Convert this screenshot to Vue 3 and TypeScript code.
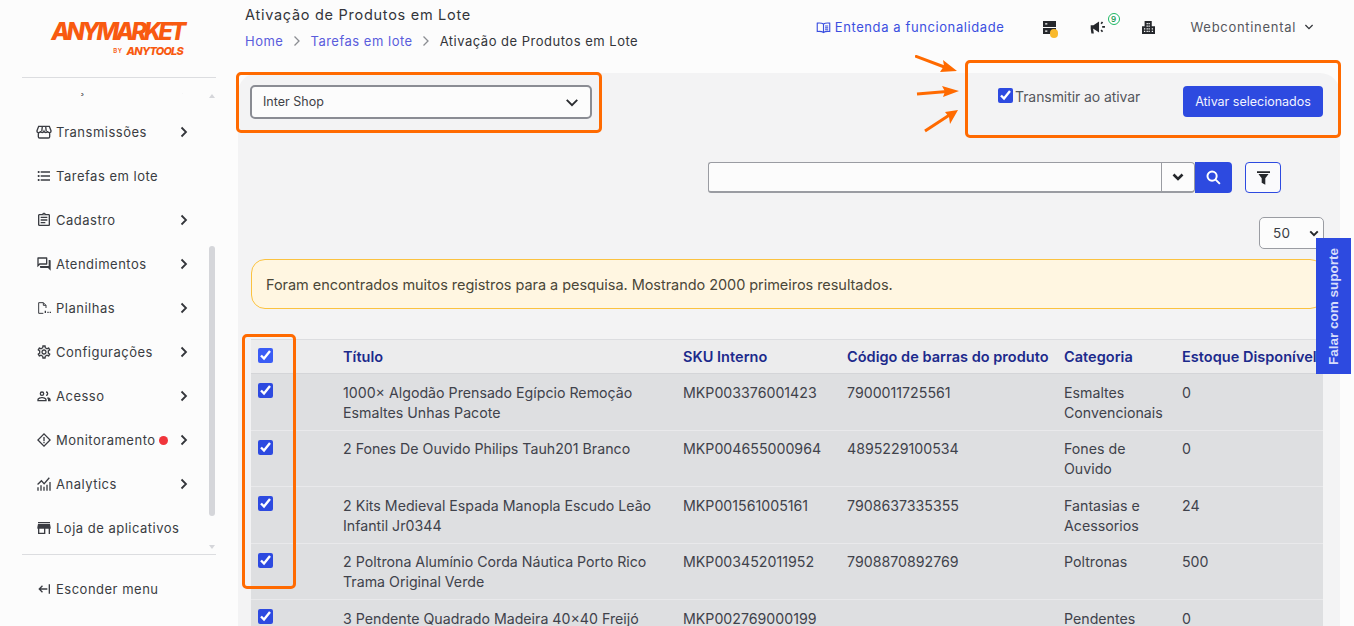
<script setup lang="ts">
interface NavItem { label: string; icon: string; chevron: boolean; dot?: boolean }
interface Row { title: string[]; sku: string; code: string; cat: string[]; stock: string }

const icons: Record<string, string> = {
  list: 'M4 10.5c-.83 0-1.5.67-1.5 1.5s.67 1.5 1.5 1.5 1.5-.67 1.5-1.5-.67-1.5-1.5-1.5zm0-6c-.83 0-1.5.67-1.5 1.5S3.17 7.5 4 7.5 5.5 6.83 5.5 6 4.83 4.5 4 4.5zm0 12c-.83 0-1.5.68-1.5 1.5s.68 1.5 1.5 1.5 1.5-.68 1.5-1.5-.67-1.5-1.5-1.5zM7 19h14v-2H7v2zm0-6h14v-2H7v2zm0-8v2h14V5H7z',
  clip: 'M7 15h7v2H7zm0-4h10v2H7zm0-4h10v2H7zm12-4h-4.18C14.4 1.84 13.3 1 12 1c-1.3 0-2.4.84-2.82 2H5c-.14 0-.27.01-.4.04-.39.08-.74.28-1.01.55-.18.18-.33.4-.43.64-.1.23-.16.49-.16.77v14c0 .27.06.54.16.78s.25.45.43.64c.27.27.62.47 1.01.55.13.02.26.03.4.03h14c1.1 0 2-.9 2-2V5c0-1.1-.9-2-2-2zm-7-.25c.41 0 .75.34.75.75s-.34.75-.75.75-.75-.34-.75-.75.34-.75.75-.75zM19 19H5V5h14v14z',
  chat: 'M15 4v7H5.17L4 12.17V4h11m1-2H3c-.55 0-1 .45-1 1v14l4-4h10c.55 0 1-.45 1-1V3c0-.55-.45-1-1-1zm5 4h-2v9H6v2c0 .55.45 1 1 1h11l4 4V7c0-.55-.45-1-1-1z',
  gear: 'M19.43 12.98c.04-.32.07-.64.07-.98 0-.34-.03-.66-.07-.98l2.11-1.65c.19-.15.24-.42.12-.64l-2-3.46c-.09-.16-.26-.25-.44-.25-.06 0-.12.01-.17.03l-2.49 1c-.52-.4-1.08-.73-1.69-.98l-.38-2.65C14.46 2.18 14.25 2 14 2h-4c-.25 0-.46.18-.49.42l-.38 2.65c-.61.25-1.17.59-1.69.98l-2.49-1c-.06-.02-.12-.03-.18-.03-.17 0-.34.09-.43.25l-2 3.46c-.13.22-.07.49.12.64l2.11 1.65c-.04.32-.07.65-.07.98 0 .33.03.66.07.98l-2.11 1.65c-.19.15-.24.42-.12.64l2 3.46c.09.16.26.25.44.25.06 0 .12-.01.17-.03l2.49-1c.52.4 1.08.73 1.69.98l.38 2.65c.03.24.24.42.49.42h4c.25 0 .46-.18.49-.42l.38-2.65c.61-.25 1.17-.59 1.69-.98l2.49 1c.06.02.12.03.18.03.17 0 .34-.09.43-.25l2-3.46c.12-.22.07-.49-.12-.64l-2.11-1.65zm-1.98-1.71c.04.31.05.52.05.73 0 .21-.02.43-.05.73l-.14 1.13.89.7 1.08.84-.7 1.21-1.27-.51-1.04-.42-.9.68c-.43.32-.84.56-1.25.73l-1.06.43-.16 1.13-.2 1.35h-1.4l-.19-1.35-.16-1.13-1.06-.43c-.43-.18-.83-.41-1.23-.71l-.91-.7-1.06.43-1.27.51-.7-1.21 1.08-.84.89-.7-.14-1.13c-.03-.31-.05-.54-.05-.74s.02-.43.05-.73l.14-1.13-.89-.7-1.08-.84.7-1.21 1.27.51 1.04.42.9-.68c.43-.32.84-.56 1.25-.73l1.06-.43.16-1.13.2-1.35h1.39l.19 1.35.16 1.13 1.06.43c.43.18.83.41 1.23.71l.91.7 1.06-.43 1.27-.51.7 1.21-1.07.85-.89.7.14 1.13zM12 8c-2.21 0-4 1.79-4 4s1.79 4 4 4 4-1.79 4-4-1.79-4-4-4zm0 6c-1.1 0-2-.9-2-2s.9-2 2-2 2 .9 2 2-.9 2-2 2z',
  people: 'M9 5a3.5 3.5 0 1 0 0 7 3.5 3.5 0 0 0 0-7zm0 2a1.5 1.5 0 1 1 0 3 1.5 1.5 0 0 1 0-3zM9 13.5c-2.7 0-7 1.3-7 4V20h14v-2.500c0-2.700-4.300-4-7-4zM4 18v-.5c.4-.9 3.200-2 5-2s4.600 1.100 5 2v.5zM15 5v2a1.500 1.500 0 0 1 0 3v2a3.500 3.500 0 0 0 0-7zM17.500 14l-1 1.400c.9.500 1.500 1.200 1.500 2.100V20h4v-2.500c0-1.800-2.200-3-4.500-3.500z',
  warn: 'M12 1.500 1.500 12 12 22.500 22.500 12zM12 4.300 19.700 12 12 19.700 4.300 12zM11 7.500h2v6h-2zM11 14.800h2v2h-2z',
  chart: 'M2 22v-5h2v5zM6.500 22v-8h2v8zM11 22v-6h2v6zM15.500 22v-9h2v9zM20 22V9h2v13zM3 13.500 1.700 12l6.500-6.500 4 4.500 7-8 1.500 1.300-8.500 9.700-4-4.500z',
  shop: 'M21 3H3v2h18zM22 13v-2l-1-5H3l-1 5v2h1v8h11v-8h5v8h2v-8zM12 19H5v-6h7z',
}

const nav: NavItem[] = [
  { label: 'Preços', icon: 'list', chevron: true },
  { label: 'Transmissões', icon: 'store', chevron: true },
  { label: 'Tarefas em lote', icon: 'list', chevron: false },
  { label: 'Cadastro', icon: 'clip', chevron: true },
  { label: 'Atendimentos', icon: 'chat', chevron: true },
  { label: 'Planilhas', icon: 'xls', chevron: true },
  { label: 'Configurações', icon: 'gear', chevron: true },
  { label: 'Acesso', icon: 'people', chevron: true },
  { label: 'Monitoramento', icon: 'warn', chevron: true, dot: true },
  { label: 'Analytics', icon: 'chart', chevron: true },
  { label: 'Loja de aplicativos', icon: 'shop', chevron: false },
]

const rows: Row[] = [
  { title: ['1000× Algodão Prensado Egípcio Remoção', 'Esmaltes Unhas Pacote'], sku: 'MKP003376001423', code: '7900011725561', cat: ['Esmaltes', 'Convencionais'], stock: '0' },
  { title: ['2 Fones De Ouvido Philips Tauh201 Branco'], sku: 'MKP004655000964', code: '4895229100534', cat: ['Fones de', 'Ouvido'], stock: '0' },
  { title: ['2 Kits Medieval Espada Manopla Escudo Leão', 'Infantil Jr0344'], sku: 'MKP001561005161', code: '7908637335355', cat: ['Fantasias e', 'Acessorios'], stock: '24' },
  { title: ['2 Poltrona Alumínio Corda Náutica Porto Rico', 'Trama Original Verde'], sku: 'MKP003452011952', code: '7908870892769', cat: ['Poltronas'], stock: '500' },
  { title: ['3 Pendente Quadrado Madeira 40×40 Freijó'], sku: 'MKP002769000199', code: '', cat: ['Pendentes'], stock: '0' },
]
</script>

<template>
  <div class="page">
    <aside class="side">
      <div class="logo">
        <div class="logo-main">ANYMARKET</div>
        <div class="logo-sub"><span class="by">BY</span><span class="tools">ANYTOOLS</span></div>
      </div>
      <div class="rule"></div>
      <div class="nav-wrap">
        <ul class="nav">
          <li v-for="item in nav" :key="item.label" class="nav-item">
            <svg class="nav-ic" viewBox="0 0 24 24" aria-hidden="true">
              <template v-if="item.icon === 'store'">
                <path class="st" d="M4 3.500h16l2.500 6.500a2.600 2.600 0 0 1-5.200.8 2.800 2.800 0 0 1-5.300 0 2.800 2.800 0 0 1-5.300 0 2.600 2.600 0 0 1-5.200-.8zM3.500 13v6a2 2 0 0 0 2 2h13a2 2 0 0 0 2-2v-6M9.500 3.500l-.8 7M14.500 3.500l.8 7" />
              </template>
              <template v-else-if="item.icon === 'xls'">
                <path class="st thin" d="M4 20V4h7l4 4v4M11 4v4h4M4 20h7" />
                <path d="M13 16h2v3.500h-2zM17 17.500h2v2h-2zM20.500 17.500h2v2h-2z" />
              </template>
              <path v-else :d="icons[item.icon]" />
            </svg>
            <span class="nav-label">{{ item.label }}</span>
            <span v-if="item.dot" class="red-dot"></span>
            <svg v-if="item.chevron" class="nav-chev" viewBox="0 0 10 12" aria-hidden="true"><path d="M2.500 1.500 7 6l-4.500 4.500" /></svg>
          </li>
        </ul>
        <div class="bar">
          <span class="bar-up"></span>
          <span class="bar-thumb"></span>
          <span class="bar-down"></span>
        </div>
      </div>
      <div class="rule"></div>
      <div class="hide-menu">
        <svg class="nav-ic" viewBox="0 0 24 24" aria-hidden="true"><path d="M9 6.500 3.500 12 9 17.500 10.400 16l-3-3H17v-2H7.400l3-3zM19 5h2v14h-2z" /></svg>
        <span>Esconder menu</span>
      </div>
    </aside>

    <main class="main">
      <header class="top">
        <div class="crumbs">
          <div class="page-title">Ativação de Produtos em Lote</div>
          <nav class="path">
            <a>Home</a>
            <svg class="sep" viewBox="0 0 10 12" aria-hidden="true"><path d="M2.500 1.500 7 6l-4.500 4.500" /></svg>
            <a>Tarefas em lote</a>
            <svg class="sep" viewBox="0 0 10 12" aria-hidden="true"><path d="M2.500 1.500 7 6l-4.500 4.500" /></svg>
            <span>Ativação de Produtos em Lote</span>
          </nav>
        </div>
        <div class="tools-top">
          <a class="learn">
            <svg class="book" viewBox="0 0 24 24" aria-hidden="true"><path d="M12 6.500C10 5 6 4.500 2 5v13.500c4-.5 8 0 10 1.500 2-1.500 6-2 10-1.500V5c-4-.5-8 0-10 1.500zM12 6.500V20M14.500 9.500h5M14.500 12.500h5M14.500 15.500h5" /></svg>
            Entenda a funcionalidade
          </a>
          <span class="t-ic t-server">
            <svg viewBox="2 2 18 18" aria-hidden="true"><path d="M2 2h18v8.200H2zM2 11.800h18V20H2z" fill="#26282c" /><path d="M5 5h3v2H5zM5 15h3v2H5z" fill="#fff" /></svg>
            <i class="amber"></i>
          </span>
          <span class="t-ic t-mega">
            <svg viewBox="1 3 23 20" aria-hidden="true"><path d="M2 9h4l8-5.500v16L6 14H5.500l1 7H3l-1-7z" fill="#26282c" /><path d="M17 7l2-2.500M18.500 11.500h4M17 16l2 2.500" stroke="#26282c" stroke-width="2.400" fill="none" /></svg>
            <b class="nine">9</b>
          </span>
          <span class="t-ic t-bld">
            <svg viewBox="2 2 20 20" aria-hidden="true"><path fill-rule="evenodd" d="M6 2h11v8h5v12H2V10h4zM9 5v2h2V5zm3 0v2h2V5zM9 9v2h2V9zm3 0v2h2V9zM9 13v2h2v-2zm3 0v2h2v-2zM5 13v2h2v-2zm12 0v2h2v-2zM5 17v2h2v-2zm4 0v2h2v-2zm3 0v2h2v-2zm5 0v2h2v-2z" fill="#26282c" /></svg>
          </span>
          <span class="account">Webcontinental
            <svg class="acc-chev" viewBox="0 0 12 10" aria-hidden="true"><path d="M1.500 2.500 6 7l4.500-4.500" /></svg>
          </span>
        </div>
      </header>

      <section class="card">
        <div class="row-controls">
          <div class="shop-select">
            <span>Inter Shop</span>
            <svg class="sel-chev" viewBox="0 0 16 10" aria-hidden="true"><path d="M2 2l6 6 6-6" /></svg>
          </div>
          <div class="actions">
            <label class="transmit"><input class="cb" type="checkbox" checked />Transmitir ao ativar</label>
            <button class="primary" type="button">Ativar selecionados</button>
          </div>
        </div>

        <div class="row-search">
          <div class="search">
            <input class="search-input" type="text" />
            <span class="search-drop"><svg viewBox="0 0 12 8" aria-hidden="true"><path d="M1.500 1.500 6 6l4.500-4.500" /></svg></span>
            <button class="search-go" type="button" aria-label="Buscar">
              <svg viewBox="0 0 24 24" aria-hidden="true"><circle cx="10" cy="10" r="6.500" /><path d="M15 15l6 6" /></svg>
            </button>
          </div>
          <button class="filter" type="button" aria-label="Filtro">
            <svg viewBox="3 3 18 19" aria-hidden="true"><path d="M3 3h18v2.500H3zM5 7h14l-4.500 6v9l-5-3v-6z" /></svg>
          </button>
        </div>

        <div class="row-size">
          <div class="size"><span>50</span><svg viewBox="0 0 12 8" aria-hidden="true"><path d="M1.500 1.500 6 6l4.500-4.500" /></svg></div>
        </div>

        <div class="alert">Foram encontrados muitos registros para a pesquisa. Mostrando 2000 primeiros resultados.</div>

        <div class="table">
          <div class="tr th">
            <div class="c-check"><input class="cb cb-head" type="checkbox" checked /></div>
            <div>Título</div>
            <div>SKU Interno</div>
            <div>Código de barras do produto</div>
            <div>Categoria</div>
            <div class="nowrap">Estoque Disponível</div>
          </div>
          <div v-for="r in rows" :key="r.sku" class="tr td">
            <div class="c-check"><input class="cb" type="checkbox" checked /></div>
            <div><div v-for="t in r.title" :key="t">{{ t }}</div></div>
            <div>{{ r.sku }}</div>
            <div>{{ r.code }}</div>
            <div><div v-for="t in r.cat" :key="t">{{ t }}</div></div>
            <div>{{ r.stock }}</div>
          </div>
        </div>
      </section>
    </main>

    <div class="support">Falar com suporte</div>

    <!-- highlight annotations drawn over the screenshot -->
    <div class="mark m-select"></div>
    <div class="mark m-actions"></div>
    <div class="mark m-checks"></div>
    <svg class="arrows" viewBox="0 0 60 80" aria-hidden="true">
      <path d="M0 1 32 13M2 39 32 36.500M10 76 36 59" />
      <path class="head" d="M42 16 25 17 29 11 28 5zM44 36 28 42 30 36.500 27 31zM43 55 35 69 34 62 30 57z" />
    </svg>
  </div>
</template>

<style>
html, body { margin: 0; background: #fcfcfc; }
</style>

<style scoped>
* { box-sizing: border-box; }
.page {
  position: relative;
  display: flex;
  width: 1354px;
  height: 626px;
  overflow: hidden;
  background: #fcfcfc;
  color: #3a3c42;
  font-family: Inter, "Noto Sans", sans-serif;
}

/* sidebar */
.side { width: 238px; flex: none; padding: 0 22px; display: flex; flex-direction: column; }
.logo { height: 77px; padding: 20px 33px 0 0; text-align: right; color: #f85a10; font-style: italic; }
.logo-main { font-size: 24px; line-height: 24px; font-weight: 800; letter-spacing: -3.200px; }
.logo-sub { display: flex; justify-content: flex-end; align-items: center; gap: 4px; margin-top: 1px; line-height: 12px; }
.by { font-size: 6px; font-style: normal; font-weight: 600; letter-spacing: .5px; }
.tools { font-size: 11px; font-weight: 800; letter-spacing: -.8px; }
.rule { height: 1px; background: #dcdde0; flex: none; }
.nav-wrap { position: relative; height: 476px; overflow: hidden; flex: none; }
.nav { list-style: none; margin: -12px 0 0; padding: 0; clip-path: inset(27px 0 0 0); }
.nav-item { height: 44px; display: flex; align-items: center; padding-left: 14px; font-size: 13px; letter-spacing: .5px; position: relative; }
.nav-ic { width: 16px; height: 16px; fill: #3a3c42; flex: none; margin-right: 4px; }
.st { fill: none; stroke: #3a3c42; stroke-width: 2; }
.st.thin { stroke-width: 1.500; }
.nav-label { white-space: nowrap; }
.red-dot { width: 9px; height: 9px; border-radius: 50%; background: #f0353b; margin-left: 3px; }
.nav-chev { position: absolute; left: 157px; top: 16px; width: 10px; height: 12px; fill: none; stroke: #33353a; stroke-width: 1.800; }
.bar { position: absolute; right: 0; top: 0; bottom: 0; width: 8px; display: block; }
.bar-thumb { position: absolute; left: 1px; top: 168px; width: 6px; height: 270px; border-radius: 3px; background: #d5d6da; }
.bar-up, .bar-down { position: absolute; left: 1px; width: 0; height: 0; border: 3px solid transparent; }
.bar-up { top: 13px; border-bottom: 4px solid #d5d6da; }
.bar-down { bottom: 2px; border-top: 4px solid #d5d6da; }
.hide-menu { display: flex; align-items: center; height: 68px; padding-left: 14px; font-size: 13px; letter-spacing: .5px; }

/* main */
.main { width: 1102px; flex: none; display: flex; flex-direction: column; min-height: 0; }
.top { height: 73px; display: flex; justify-content: space-between; padding: 6px 26px 0 7px; }
.page-title { font-size: 14.500px; line-height: 17px; letter-spacing: .72px; color: #33353a; }
.path { display: flex; align-items: center; margin-top: 10px; font-size: 13px; line-height: 16px; letter-spacing: .5px; color: #33353a; }
.path a { color: #5a5ddc; }
.sep { width: 10px; height: 12px; margin: 0 8.500px; fill: none; stroke: #8b8d92; stroke-width: 1.300; }
.tools-top { display: flex; align-items: flex-start; padding-top: 13px; font-size: 13px; letter-spacing: .6px; }
.learn { display: flex; align-items: center; gap: 4px; color: #3b4fe0; line-height: 16px; margin-right: 38px; }
.book { width: 15px; height: 15px; fill: none; stroke: #3b4fe0; stroke-width: 1.800; }
.t-ic { position: relative; display: block; width: 16px; height: 14px; margin-top: 2px; margin-right: 31px; }
.t-ic svg { display: block; width: 16px; height: 14px; }
.t-server svg { width: 13px; height: 13px; }
.t-bld svg { width: 13px; height: 13px; }
.amber { position: absolute; left: 7px; top: 8px; width: 8.500px; height: 8.500px; border-radius: 50%; background: #f9b92c; }
.nine { position: absolute; left: 18px; top: -8px; width: 12px; height: 12px; border: 1px solid #1fb864; border-radius: 50%; background: #fff; color: #1b9c55; font-size: 8px; line-height: 10px; text-align: center; font-weight: 600; letter-spacing: 0; }
.t-mega { margin-right: 36px; }
.t-bld { width: 13px; margin-right: 36px; }
.account { display: flex; align-items: center; color: #55575c; line-height: 16px; letter-spacing: .7px; }
.acc-chev { width: 10px; height: 8px; margin-left: 8px; fill: none; stroke: #33353a; stroke-width: 1.600; }

/* card */
.card {
  flex: 1;
  min-height: 0;
  overflow: hidden;
  background: #f3f3f4;
  border-radius: 20px 20px 0 0;
  padding: 12px 16px 0 13px;
}
.row-controls { display: flex; justify-content: space-between; align-items: flex-start; height: 77px; }
.shop-select { width: 342px; height: 34px; margin-left: -1px; border: 2px solid #8a8c93; border-radius: 5px; background: #fcfcfc; display: flex; align-items: center; justify-content: space-between; padding: 0 11px 2px 11px; font-size: 12.500px; color: #3f4147; }
.sel-chev { width: 14px; height: 9px; fill: none; stroke: #2b2d31; stroke-width: 2.200; margin-top: 2px; }
.actions { display: flex; align-items: flex-start; width: 326px; }
.transmit { display: flex; align-items: center; gap: 2px; width: 185px; height: 22px; font-size: 14px; letter-spacing: -.08px; color: #55575c; }
.cb { width: 15px; height: 15px; margin: 0; accent-color: #2d4ae0; flex: none; }
.transmit .cb { margin-bottom: 1px; }
.primary { width: 140px; height: 31px; margin-top: 1px; border: 0; border-radius: 4px; background: #2d4ae0; color: #f2f3ff; font: 12.500px Inter, "Noto Sans", sans-serif; letter-spacing: 0; }
.row-search { display: flex; justify-content: flex-end; height: 55px; gap: 13px; padding-right: 43px; }
.search { display: flex; height: 31px; width: 524px; }
.search-input { width: 453px; height: 31px; border: 1px solid #9a9ca2; border-bottom-width: 2px; border-right: 0; background: #fcfcfc; border-radius: 3px 0 0 3px; padding: 0; outline: 0; }
.search-drop { width: 34px; height: 31px; display: flex; align-items: center; justify-content: center; background: #fcfcfc; border: 1px solid #9a9ca2; border-bottom-width: 2px; border-radius: 0 4px 4px 0; }
.search-drop svg { width: 12px; height: 8px; fill: none; stroke: #25272b; stroke-width: 2.600; }
.search-go { width: 37px; height: 31px; border: 0; padding: 0; background: #2d4ae0; border-radius: 0 4px 4px 0; display: flex; align-items: center; justify-content: center; }
.search-go svg { width: 17px; height: 17px; fill: none; stroke: #fff; stroke-width: 2.800; }
.filter { width: 36px; height: 31px; background: #fafafc; border: 1px solid #2d4ae0; border-radius: 4px; padding: 0; display: flex; align-items: center; justify-content: center; }
.filter svg { width: 13px; height: 14px; fill: #25272b; }
.row-size { display: flex; justify-content: flex-end; height: 42px; }
.size { width: 65px; height: 32px; border: 1.500px solid #9a9ca2; border-radius: 5px; background: #fcfcfc; display: flex; align-items: center; justify-content: space-between; padding: 0 4px 0 13px; font-size: 13.500px; color: #3a3c42; letter-spacing: .4px; }
.size svg { width: 10px; height: 7px; fill: none; stroke: #25272b; stroke-width: 2.400; }
.alert { height: 50px; border: 1px solid #fbc23f; border-radius: 14px; background: #fff6e1; padding: 0 14px; display: flex; align-items: center; font-size: 14.500px; letter-spacing: -.05px; color: #4a4738; margin-bottom: 30px; }
.table { width: 1072px; }
.tr { display: grid; grid-template-columns: 92px 340px 164px 217px 118px 1fr; }
.th { height: 35px; align-items: center; background: #ececed; border-top: 1px solid #dcdde0; border-bottom: 1px solid #d4d5d8; color: #1c2a8c; font-weight: 600; font-size: 14.500px; letter-spacing: .03px; }
.td { height: 56.500px; background: #dedfe1; border-bottom: 1px solid #e9e9eb; padding-top: 8.600px; font-size: 14.200px; line-height: 20px; letter-spacing: 0; color: #40424b; }
.td > div { white-space: nowrap; }
.c-check { padding-left: 7px; display: flex; }
.th .c-check { align-items: flex-start; padding-top: 8px; height: 100%; }
.td .cb { margin-top: .6px; }
.cb-head { accent-color: #3a5cf5; }
.nowrap { white-space: nowrap; overflow: hidden; }

/* overlays */
.support { position: absolute; left: 1316px; top: 238px; width: 35px; height: 136px; background: #2d4ae0; color: #d6dcfb; font: 700 13.500px "Liberation Sans", Arial, sans-serif; writing-mode: vertical-rl; rotate: 180deg; display: flex; align-items: center; justify-content: center; }
.mark { position: absolute; border: 3px solid #ff6a00; border-radius: 5px; pointer-events: none; }
.m-select { left: 236px; top: 72px; width: 366px; height: 61px; }
.m-actions { left: 965px; top: 60px; width: 376px; height: 78px; }
.m-checks { left: 242px; top: 334px; width: 54px; height: 255px; }
.arrows { position: absolute; left: 915px; top: 55px; width: 60px; height: 80px; fill: none; stroke: #ff6a00; stroke-width: 3; }
.head { fill: #ff6a00; stroke: none; }
</style>
